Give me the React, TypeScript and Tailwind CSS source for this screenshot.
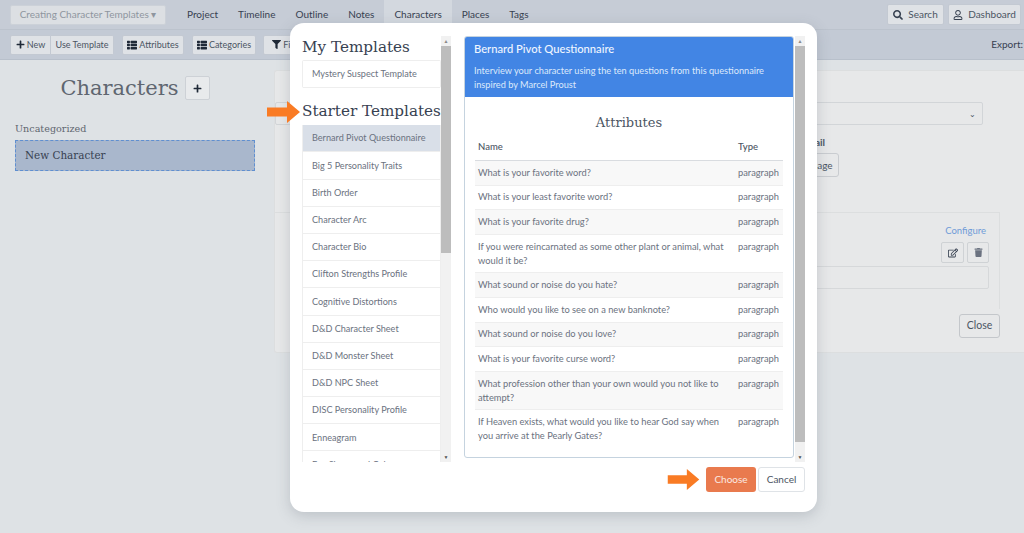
import { FaFilter, FaPlus, FaRegEdit, FaSearch, FaRegUser, FaThList, FaTrash } from 'react-icons/fa';

const myTemplates = ['Mystery Suspect Template'];

const starterTemplates = [
  'Bernard Pivot Questionnaire',
  'Big 5 Personality Traits',
  'Birth Order',
  'Character Arc',
  'Character Bio',
  'Clifton Strengths Profile',
  'Cognitive Distortions',
  'D&D Character Sheet',
  'D&D Monster Sheet',
  'D&D NPC Sheet',
  'DISC Personality Profile',
  'Enneagram',
  'Eye Shape and Color',
];

const attributes = [
  'What is your favorite word?',
  'What is your least favorite word?',
  'What is your favorite drug?',
  'If you were reincarnated as some other plant or animal, what would it be?',
  'What sound or noise do you hate?',
  'Who would you like to see on a new banknote?',
  'What sound or noise do you love?',
  'What is your favorite curse word?',
  'What profession other than your own would you not like to attempt?',
  'If Heaven exists, what would you like to hear God say when you arrive at the Pearly Gates?',
];

const navItems = ['Project', 'Timeline', 'Outline', 'Notes', 'Characters', 'Places', 'Tags'];

const serif = 'font-["DejaVu_Serif",serif]';

function Arrow({ className }: { className?: string }) {
  return (
    <svg viewBox="0 0 33 22" className={className} fill="#f97b24">
      <path d="M0 6.5h20V0l13 11-13 11v-6.5H0z" />
    </svg>
  );
}

function BarButton({ children, className }: { children: React.ReactNode; className?: string }) {
  return (
    <div
      className={`flex h-[20px] items-center justify-center gap-[2px] rounded-[2px] border border-[#c3c9d2] bg-[#dfe2e6] text-[9px] text-[#4b5563] ${className ?? ''}`}
    >
      {children}
    </div>
  );
}

function Scrollbar({ thumbClass }: { thumbClass: string }) {
  return (
    <div className="flex w-[10px] shrink-0 flex-col bg-[#f1f1f1]">
      <div className="flex h-[10px] items-center justify-center text-[5px] leading-none text-[#8a8a8a]">▲</div>
      <div className={`bg-[#bdbdbd] ${thumbClass}`} />
      <div className="flex-1" />
      <div className="flex h-[10px] items-center justify-center text-[5px] leading-none text-[#505050]">▼</div>
    </div>
  );
}

function TemplateRow({ name, active }: { name: string; active?: boolean }) {
  return (
    <div
      className={`flex h-[27.2px] shrink-0 items-center border-b border-[#eeeeee] pl-[9px] text-[9.1px] text-[#6b7280] whitespace-nowrap ${active ? 'bg-[#d9dfe8]' : 'bg-white'}`}
    >
      {name}
    </div>
  );
}

function TemplateModal() {
  return (
    <div className='absolute top-[23px] left-[290px] flex h-[489px] w-[527px] flex-col rounded-[14px] bg-white px-[12px] pt-[13px] shadow-[0_4px_14px_rgba(90,100,110,0.25)] font-["Lato",sans-serif]'>
      <div className="flex h-[426px] shrink-0">
        <div className="flex w-[139px] shrink-0 flex-col overflow-hidden">
          <h2 className={`h-[24px] shrink-0 text-[15.2px] leading-[22px] whitespace-nowrap text-[#374151] ${serif}`}>My Templates</h2>
          <div className="shrink-0 rounded-[2px] border border-b-0 border-[#eeeeee]">
            {myTemplates.map((name) => (
              <TemplateRow key={name} name={name} />
            ))}
          </div>
          <h2 className={`mt-[9px] h-[28px] shrink-0 text-[15.2px] leading-[28px] whitespace-nowrap text-[#374151] ${serif}`}>
            Starter Templates
          </h2>
          <div className="border-x border-[#eeeeee]">
            {starterTemplates.map((name, i) => (
              <TemplateRow key={name} name={name} active={i === 0} />
            ))}
          </div>
        </div>
        <Scrollbar thumbClass="h-[207px]" />
        <div className="ml-[13px] flex min-w-0 flex-1 overflow-hidden">
          <div className="flex h-[422px] w-[330px] shrink-0 flex-col overflow-hidden rounded-[3px] border border-[#c5d3df]">
            <div className="h-[60px] shrink-0 bg-[#4285e4] px-[9px] pt-[5px] text-[#dce9fb]">
              <div className="text-[11.2px] leading-[14px] font-medium text-[#f0f6ff]">Bernard Pivot Questionnaire</div>
              <p className="mt-[8px] text-[9.2px] leading-[14px]">
                Interview your character using the ten questions from this questionnaire inspired by Marcel Proust
              </p>
            </div>
            <h3 className={`mt-[17px] text-center text-[13px] leading-[18px] text-[#4b5563] ${serif}`}>Attributes</h3>
            <div className="mx-[10px] mt-[3px]">
              <div className="flex h-[26px] items-center border-b border-[#d9dce0] text-[9.5px] font-medium text-[#4b5563]">
                <span className="w-[263px] pl-[3px]">Name</span>
                <span>Type</span>
              </div>
              {attributes.map((attribute, i) => (
                <div
                  key={attribute}
                  className={`flex border-b border-[#eeeeee] py-[4.8px] text-[9.3px] leading-[14px] text-[#6b7280] last:border-b-0 ${i % 2 === 0 ? 'bg-[#f8f8f8]' : 'bg-white'}`}
                >
                  <span className="w-[263px] shrink-0 pr-[12px] pl-[3px]">{attribute}</span>
                  <span>paragraph</span>
                </div>
              ))}
            </div>
          </div>
        </div>
        <Scrollbar thumbClass="h-[396px]" />
      </div>
      <div className="mt-[5px] flex items-center justify-end gap-[2px]">
        <Arrow className="mr-[4px] h-[21px] w-[33px]" />
        <div className="flex h-[25px] w-[50px] items-center justify-center rounded-[3px] bg-[#e97a4e] text-[10px] text-[#fbe9e1]">
          Choose
        </div>
        <div className="flex h-[25px] w-[47px] items-center justify-center rounded-[3px] border border-[#dfe3e7] bg-white text-[10px] text-[#4b5563]">
          Cancel
        </div>
      </div>
    </div>
  );
}

export default function App() {
  return (
    <div className='relative flex h-[533px] w-[1024px] flex-col overflow-hidden bg-[#dee2e5] font-["Lato",sans-serif]'>
      <header className="flex h-[30px] shrink-0 items-center border-b border-[#bcc3cd] bg-[#c6ccd6] pr-[3px] pl-[10px]">
        <div className="flex h-[20px] w-[156px] items-center justify-center rounded-[2px] border border-[#ccd1d8] bg-[#dcdfe3] text-[10px] text-[#8f969f]">
          Creating Character Templates ▾
        </div>
        <nav className="ml-[11px] flex h-full items-center text-[10px] text-[#374151]">
          {navItems.map((item) => (
            <div
              key={item}
              className={`flex h-full items-center px-[10px] ${item === 'Characters' ? 'bg-[#d3d8df]' : ''}`}
            >
              {item}
            </div>
          ))}
        </nav>
        <div className="ml-auto flex gap-[4px]">
          <BarButton className="h-[21px] w-[57px] gap-[5px] text-[10px]">
            <FaSearch className="h-[10px] w-[10px] text-[#374151]" /> Search
          </BarButton>
          <BarButton className="h-[21px] w-[73px] gap-[5px] text-[10px]">
            <FaRegUser className="h-[10px] w-[10px] text-[#374151]" /> Dashboard
          </BarButton>
        </div>
      </header>

      <div className="flex h-[30px] shrink-0 items-center gap-[8px] border-b border-[#b8c0cb] bg-[#c3cad5] pr-[1px] pl-[10px]">
        <div className="flex">
          <BarButton className="w-[41px] rounded-r-none">
            <FaPlus className="h-[9px] w-[9px] text-[#1f2937]" /> New
          </BarButton>
          <BarButton className="w-[63px] rounded-l-none border-l-0">Use Template</BarButton>
        </div>
        <BarButton className="w-[62px]">
          <FaThList className="h-[10px] w-[10px] text-[#1f2937]" /> Attributes
        </BarButton>
        <BarButton className="w-[64px]">
          <FaThList className="h-[10px] w-[10px] text-[#1f2937]" /> Categories
        </BarButton>
        <BarButton className="-ml-px w-[50px]">
          <FaFilter className="h-[9px] w-[9px] text-[#1f2937]" /> Filter
        </BarButton>
        <span className="ml-auto text-[10px] text-[#374151]">Export:</span>
      </div>

      <div className="flex flex-1">
        <aside className="w-[274px] shrink-0 pt-[13px] pl-[15px]">
          <div className="flex w-[240px] items-center justify-center gap-[6px]">
            <h1 className={`text-[21px] leading-[30px] text-[#5f6670] ${serif}`}>Characters</h1>
            <div className="flex h-[24px] w-[25px] items-center justify-center rounded-[2px] border border-[#cdd1d6] bg-[#e8eaec]">
              <FaPlus className="h-[9px] w-[9px] text-[#1f2937]" />
            </div>
          </div>
          <div className={`mt-[19px] text-[9.6px] leading-[14px] text-[#5f6670] ${serif}`}>Uncategorized</div>
          <div
            className={`mt-[4px] flex h-[31px] w-[240px] items-center border border-dashed border-[#5f8fd0] bg-[#a9b7cc] pl-[9px] text-[10.4px] text-[#374151] ${serif}`}
          >
            New Character
          </div>
        </aside>

        <section className="mt-[10px] flex h-[283px] flex-1 flex-col rounded-l-[3px] border border-r-0 border-[#dcdedf] bg-[#e7e8e9] pr-[24px] text-[10px] text-[#4b5563]">
          <div className="mt-[31px] mr-[17px] flex h-[23px] items-center justify-end rounded-[2px] border border-[#d2d5d8] pr-[6px] pl-[540px]">
            <span className="text-[8px]">⌄</span>
          </div>
          <div className="mt-[10px] ml-[503px] text-[10px] font-bold">Thumbnail</div>
          <div className="mt-[3px] ml-[489px] flex h-[24px] w-[75px] items-center justify-center rounded-[3px] border border-[#c9ccd0]">
            Change Image
          </div>
          <div className="mt-[35px] flex h-[97px] flex-col items-end border-t border-r border-[#dcdedf] pt-[11px] pr-[10px]">
            <span className="mr-[3px] text-[9.5px] text-[#6f9bd8]">Configure</span>
            <div className="mt-[4px] flex gap-[3px]">
              <div className="flex h-[21px] w-[23px] items-center justify-center rounded-[2px] border border-[#cfd2d5]">
                <FaRegEdit className="h-[10px] w-[10px] text-[#374151]" />
              </div>
              <div className="flex h-[21px] w-[22px] items-center justify-center rounded-[2px] border border-[#cfd2d5]">
                <FaTrash className="h-[9px] w-[9px] text-[#6b7280]" />
              </div>
            </div>
            <div className="mt-[3px] h-[23px] w-[400px] rounded-[2px] border border-[#d6d8da]" />
          </div>
          <div className="mt-[5px] flex justify-end">
            <div className="flex h-[24px] w-[41px] items-center justify-center rounded-[3px] border border-[#c4c7cb] text-[10.5px]">
              Close
            </div>
          </div>
        </section>
      </div>

      <TemplateModal />
      <Arrow className="absolute top-[101px] left-[267px] h-[22px] w-[33px]" />
    </div>
  );
}
